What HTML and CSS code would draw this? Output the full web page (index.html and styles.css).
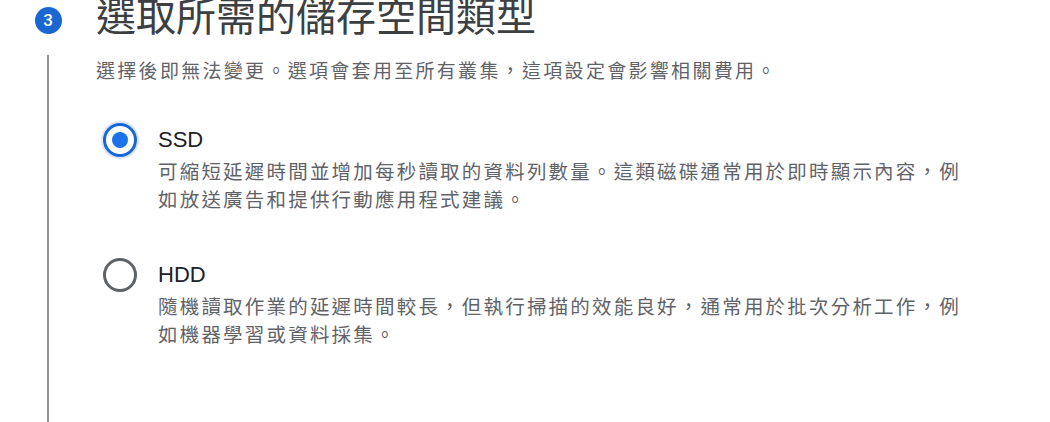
FILE: index.html
```html
<!DOCTYPE html>
<html lang="zh-Hant">
<head>
<meta charset="utf-8">
<link rel="stylesheet" href="styles.css">
</head>
<body>
<section class="step">
  <div class="rail">
    <div class="step-num">3</div>
    <div class="rail-line"></div>
  </div>
  <div class="content">
    <h2 class="title">選取所需的儲存空間類型</h2>
    <p class="subtitle">選擇後即無法變更。選項會套用至所有叢集，這項設定會影響相關費用。</p>
    <div class="options">
      <label class="option">
        <span class="radio checked"><span class="dot"></span></span>
        <span class="option-text">
          <span class="option-label">SSD</span>
          <span class="option-desc">可縮短延遲時間並增加每秒讀取的資料列數量。這類磁碟通常用於即時顯示內容，例如放送廣告和提供行動應用程式建議。</span>
        </span>
      </label>
      <label class="option">
        <span class="radio"></span>
        <span class="option-text">
          <span class="option-label">HDD</span>
          <span class="option-desc">隨機讀取作業的延遲時間較長，但執行掃描的效能良好，通常用於批次分析工作，例如機器學習或資料採集。</span>
        </span>
      </label>
    </div>
  </div>
</section>
</body>
</html>
```

FILE: styles.css
```css
* { box-sizing: border-box; }
html, body { margin: 0; padding: 0; background: #ffffff; }
body {
  font-family: "Liberation Sans", "Noto Sans CJK TC", Arial, sans-serif;
  color: #202124;
}
.step {
  display: flex;
  min-height: 422px;
}
.rail {
  width: 96px;
  flex: 0 0 96px;
  display: flex;
  flex-direction: column;
  align-items: center;
}
.step-num {
  width: 27px;
  height: 27px;
  margin-top: 7px;
  border-radius: 50%;
  background: #1967d2;
  color: #ffffff;
  font-family: Roboto, "Liberation Sans", sans-serif;
  font-size: 17px;
  font-weight: 500;
  line-height: 27px;
  text-align: center;
}
.rail-line {
  flex: 1;
  width: 2px;
  margin-top: 21px;
  background: #939393;
}
.content {
  flex: 1;
  min-width: 0;
}
.title {
  margin: -5px 0 0;
  font-size: 40px;
  font-weight: 400;
  line-height: 44px;
  color: #3c4043;
}
.subtitle {
  margin: 19px 0 0;
  font-size: 19px;
  letter-spacing: 2.3px;
  line-height: 28px;
  color: #5f6368;
}
.options {
  display: flex;
  flex-direction: column;
  gap: 44px;
  margin-top: 37px;
}
.option {
  display: flex;
  align-items: flex-start;
}
.radio {
  flex: 0 0 34px;
  width: 34px;
  height: 34px;
  margin: 0 21px 0 7px;
  border: 3px solid #5f6368;
  border-radius: 50%;
  display: flex;
  align-items: center;
  justify-content: center;
}
.radio.checked {
  border-color: #1967d2;
  box-shadow: 0 0 0 2px rgba(26, 115, 232, 0.18);
}
.dot {
  width: 16px;
  height: 16px;
  border-radius: 50%;
  background: #1a73e8;
}
.option-text {
  display: flex;
  flex-direction: column;
  width: 820px;
}
.option-label {
  font-size: 22px;
  line-height: 33px;
  margin-bottom: 2px;
  color: #202124;
}
.option-desc {
  font-size: 19.5px;
  letter-spacing: 2.2px;
  line-height: 28px;
  color: #5f6368;
  width: 820px;
}
```
